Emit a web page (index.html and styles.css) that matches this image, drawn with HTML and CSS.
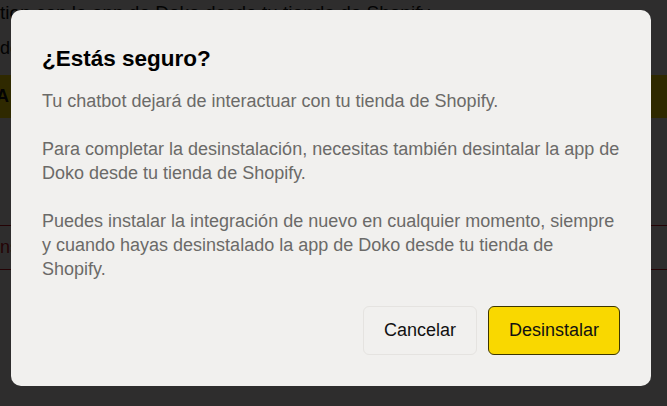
FILE: index.html
```html
<!DOCTYPE html>
<html lang="es">
<head>
  <meta charset="UTF-8">
  <meta name="viewport" content="width=device-width, initial-scale=1.0">
  <title>Desinstalar integración</title>
  <link rel="stylesheet" href="styles.css">
</head>
<body>
  <div class="page">
    <h1 class="page-title">tion con la app de Doko desde tu tienda de Shopify</h1>
    <p class="page-sub">de</p>
    <div class="page-banner">A</div>
    <div class="page-row">ns</div>
  </div>

  <div class="overlay">
    <div class="modal" role="dialog">
      <h2 class="modal-title">¿Estás seguro?</h2>
      <p>Tu chatbot dejará de interactuar con tu tienda de Shopify.</p>
      <p>Para completar la desinstalación, necesitas también desintalar la app de Doko desde tu tienda de Shopify.</p>
      <p>Puedes instalar la integración de nuevo en cualquier momento, siempre y cuando hayas desinstalado la app de Doko desde tu tienda de Shopify.</p>
      <div class="modal-actions">
        <button type="button" class="btn btn-cancel">Cancelar</button>
        <button type="button" class="btn btn-danger">Desinstalar</button>
      </div>
    </div>
  </div>
</body>
</html>
```

FILE: styles.css
```css
body {
  margin: 0;
  font-family: "Liberation Sans", Arial, sans-serif;
  background-color: #f1f0ee;
  color: #111;
}

.page {
  padding: 0;
}

.page-title {
  margin: 0;
  padding-top: 1px;
  font-size: 19px;
  font-weight: normal;
  line-height: 24px;
}

.page-sub {
  margin: 10px 0 0;
  font-size: 18px;
  line-height: 26px;
}

.page-banner {
  margin-top: 14px;
  height: 43px;
  background-color: #f9d800;
  display: flex;
  align-items: center;
  font-weight: bold;
  font-size: 18px;
  margin-left: -4px;
}

.page-row {
  margin-top: 107px;
  height: 43px;
  border-top: 1px solid #c0111b;
  border-bottom: 1px solid #c0111b;
  color: #c0111b;
  display: flex;
  align-items: center;
  font-size: 18px;
}

.overlay {
  position: fixed;
  inset: 0;
  background-color: rgba(0, 0, 0, 0.81);
}

.modal {
  position: absolute;
  left: 11px;
  top: 10px;
  width: 640px;
  box-sizing: border-box;
  padding: 33px 31px 31px;
  background-color: #f1f0ee;
  border-radius: 10px;
}

.modal-title {
  margin: 0 0 14px;
  font-size: 22.5px;
  line-height: 32px;
  font-weight: bold;
  color: #000;
}

.modal p {
  margin: 0 0 24px;
  margin-right: -2px;
  font-size: 18px;
  line-height: 24px;
  color: #6b6a68;
}

.modal p:last-of-type {
  margin-bottom: 0;
}

.modal-actions {
  display: flex;
  justify-content: flex-end;
  gap: 11px;
  margin-top: 25px;
}

.btn {
  font-family: inherit;
  font-size: 18px;
  height: 49px;
  padding: 0 20px;
  border-radius: 6px;
  color: #111;
  cursor: pointer;
}

.btn-cancel {
  background-color: #f1f0ee;
  border: 1px solid #e5e3e0;
}

.btn-danger {
  background-color: #f9d800;
  border: 1px solid #3d3600;
}
```
